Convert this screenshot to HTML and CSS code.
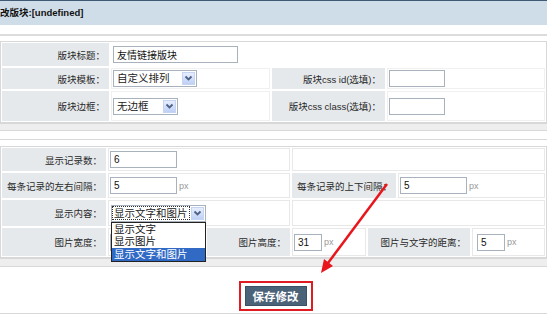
FILE: index.html
```html
<!DOCTYPE html>
<html lang="zh-CN">
<head>
    <meta charset="UTF-8" />
    <title>修改版块</title>
    <link rel="stylesheet" href="styles.css">
</head>
<body>
<div class="page">

    <div class="topline"></div>
    <div class="title">改版块:[undefined]</div>
    <div class="rule"></div>

    <!-- 基本设置 -->
    <div class="block block-a">
        <div class="row cols-a h23">
            <div class="lab">版块标题：</div>
            <div class="val wide"><input class="txt w125" type="text" value="友情链接版块" /></div>
        </div>
        <div class="row cols-a h21">
            <div class="lab">版块模板：</div>
            <div class="val">
                <div class="sel w84"><span class="sel-text">自定义排列</span><span class="sel-btn"><svg width="9" height="7" viewBox="0 0 9 7"><path d="M1.5 1.5 L4.5 4.5 L7.5 1.5" fill="none" stroke="#4d6185" stroke-width="1.8"/></svg></span></div>
            </div>
            <div class="lab">版块css id(选填)：</div>
            <div class="val"><input class="txt w56" type="text" value="" /></div>
        </div>
        <div class="row cols-a h30">
            <div class="lab">版块边框：</div>
            <div class="val">
                <div class="sel w65"><span class="sel-text">无边框</span><span class="sel-btn"><svg width="9" height="7" viewBox="0 0 9 7"><path d="M1.5 1.5 L4.5 4.5 L7.5 1.5" fill="none" stroke="#4d6185" stroke-width="1.8"/></svg></span></div>
            </div>
            <div class="lab">版块css class(选填)：</div>
            <div class="val"><input class="txt w56" type="text" value="" /></div>
        </div>
    </div>

    <div class="band"></div>
    <div class="rule thin"></div>

    <!-- 显示设置 -->
    <div class="block block-b">
        <div class="row cols-b h23">
            <div class="lab">显示记录数：</div>
            <div class="val"><input class="txt w67" type="text" value="6" /></div>
            <div class="val span2"></div>
        </div>
        <div class="row cols-b h25">
            <div class="lab">每条记录的左右间隔：</div>
            <div class="val"><input class="txt w67" type="text" value="5" /><span class="unit">px</span></div>
            <div class="lab">每条记录的上下间隔：</div>
            <div class="val"><input class="txt w67" type="text" value="5" /><span class="unit">px</span></div>
        </div>
        <div class="row cols-b h26">
            <div class="lab">显示内容：</div>
            <div class="val pad3">
                <div class="sel w95 open">
                    <span class="sel-text"><span class="focus">显示文字和图片</span></span><span class="sel-btn"><svg width="9" height="7" viewBox="0 0 9 7"><path d="M1.5 1.5 L4.5 4.5 L7.5 1.5" fill="none" stroke="#4d6185" stroke-width="1.8"/></svg></span>
                    <ul class="list">
                        <li>显示文字</li>
                        <li>显示图片</li>
                        <li class="on">显示文字和图片</li>
                    </ul>
                </div>
            </div>
            <div class="val span2"></div>
        </div>
        <div class="row cols-c h28">
            <div class="lab">图片宽度：</div>
            <div class="val"><input class="txt w28" type="text" value="" /></div>
            <div class="lab">图片高度：</div>
            <div class="val"><input class="txt w28" type="text" value="31" /><span class="unit">px</span></div>
            <div class="lab">图片与文字的距离：</div>
            <div class="val pad5"><input class="txt w28" type="text" value="5" /><span class="unit">px</span></div>
        </div>
    </div>

    <div class="band tall"></div>

    <div class="foot">
        <div class="frame"><button class="btn">保存修改</button></div>
    </div>
    <div class="bottomline"></div>

    <!-- 红色提示箭头 -->
    <svg class="arrow" width="547" height="314" viewBox="0 0 547 314">
        <line x1="387" y1="184" x2="328" y2="263" stroke="#e8161c" stroke-width="2.5"/>
        <polygon points="321,273 333,266 324,259" fill="#e8161c"/>
    </svg>

</div>
</body>
</html>
```

FILE: styles.css
```css
body {
    margin: 0;
    background: #fff;
    color: #222;
    font-family: "Liberation Sans", "Noto Sans CJK SC", sans-serif;
    font-size: 10px;
}
.page {
    position: relative;
    width: 547px;
    height: 314px;
    overflow: hidden;
}
.topline {
    height: 1px;
    background: #3e5a74;
}
.title {
    height: 24px;
    line-height: 24px;
    background: #cfdde9;
    font-weight: bold;
    font-size: 9.5px;
    color: #111;
}
.rule {
    margin-top: 9px;
    height: 2px;
    background: #dcdcdc;
}
.rule.thin {
    margin-top: 8px;
    height: 1px;
    background: #d8d8d8;
}
.block {
    border: 1px solid #d8d8d8;
    padding: 1px;
    display: grid;
    row-gap: 2px;
}
.block-a {
    margin-top: 5px;
}
.block-b {
    margin-top: 6px;
}
.row {
    display: grid;
    column-gap: 2px;
}
.cols-a {
    grid-template-columns: 107px 159px 113px 1fr;
}
.cols-b {
    grid-template-columns: 104px 182px 104px 1fr;
}
.cols-c {
    grid-template-columns: 104px 97px 83px 74px 102px 1fr;
}
.h21 { height: 21px; }
.h23 { height: 23px; }
.h25 { height: 25px; }
.h26 { height: 26px; }
.h28 { height: 28px; }
.h30 { height: 30px; }

.lab {
    background: #e6e9ec;
    display: flex;
    align-items: center;
    justify-content: flex-end;
    padding-right: 4px;
    font-size: 9.5px;
    color: #2a2a2a;
    white-space: nowrap;
}
.val {
    display: flex;
    align-items: center;
    padding-left: 2px;
    box-shadow: inset 0 0 0 1px #f0f0f0;
}
.block-b .val {
    box-shadow: inset 0 0 0 1px #e8e8e8;
}
.val.wide {
    grid-column: 2 / 5;
    box-shadow: none;
}
.val.span2 {
    grid-column: 3 / 5;
}
.val.pad3 {
    padding-left: 3px;
}
.val.pad5 {
    padding-left: 5px;
}

.txt {
    box-sizing: border-box;
    height: 17px;
    margin: 0;
    padding: 0 3px;
    border: 1px solid #a7b2bd;
    background: #fff;
    font-family: "Liberation Sans", "Noto Sans CJK SC", sans-serif;
    font-size: 10px;
    color: #111;
    outline: none;
}
.w125 { width: 125px; }
.w56 { width: 56px; }
.w67 { width: 67px; }
.w28 { width: 28px; }
.w84 { width: 84px; }
.w65 { width: 65px; }
.w95 { width: 95px; }

.unit {
    margin-left: 2px;
    color: #999;
    font-size: 9px;
}

.sel {
    position: relative;
    box-sizing: border-box;
    height: 17px;
    display: flex;
    align-items: center;
    border: 1px solid #a7b2bd;
    background: #fff;
    font-size: 10.5px;
}
.sel-text {
    flex: 1;
    padding-left: 3px;
    white-space: nowrap;
    line-height: 13px;
}
.sel-btn {
    width: 13px;
    height: 13px;
    margin-right: 1px;
    display: flex;
    align-items: center;
    justify-content: center;
    background: linear-gradient(#e7eefd, #bfd0f6);
    border: 1px solid #c5d4f3;
    box-sizing: border-box;
}
.focus {
    display: inline-block;
    outline: 1px dotted #333;
    line-height: 12px;
    padding: 0 1px;
    margin-left: -2px;
}
.list {
    position: absolute;
    top: 16px;
    left: -1px;
    width: 95px;
    margin: 0;
    padding: 0;
    list-style: none;
    background: #fff;
    border: 1px solid #222;
    box-sizing: border-box;
    z-index: 2;
}
.list li {
    height: 12.7px;
    line-height: 12.7px;
    padding-left: 2px;
    font-size: 10.5px;
    color: #111;
    white-space: nowrap;
}
.list li.on {
    background: #316ac5;
    color: #fff;
}

.band {
    height: 6px;
    background: #eeeeee;
    border-top: 1px solid #d8d8d8;
    border-bottom: 1px solid #d8d8d8;
}
.band.tall {
    height: 7px;
}
.foot {
    display: flex;
    justify-content: center;
    padding-top: 14px;
    padding-left: 4px;
    height: 32px;
    box-sizing: content-box;
}
.frame {
    border: 2px solid #e01b22;
    padding: 3px 4px;
    height: 20px;
}
.btn {
    width: 62px;
    height: 20px;
    margin: 0;
    padding: 0;
    border: 1px solid #3a5064;
    background: #4b6378;
    color: #fff;
    font-family: "Noto Sans CJK SC", sans-serif;
    font-weight: bold;
    font-size: 11.5px;
    line-height: 18px;
}
.bottomline {
    height: 1px;
    background: #d8d8d8;
}
.arrow {
    position: absolute;
    left: 0;
    top: 0;
    pointer-events: none;
    z-index: 3;
}
```
